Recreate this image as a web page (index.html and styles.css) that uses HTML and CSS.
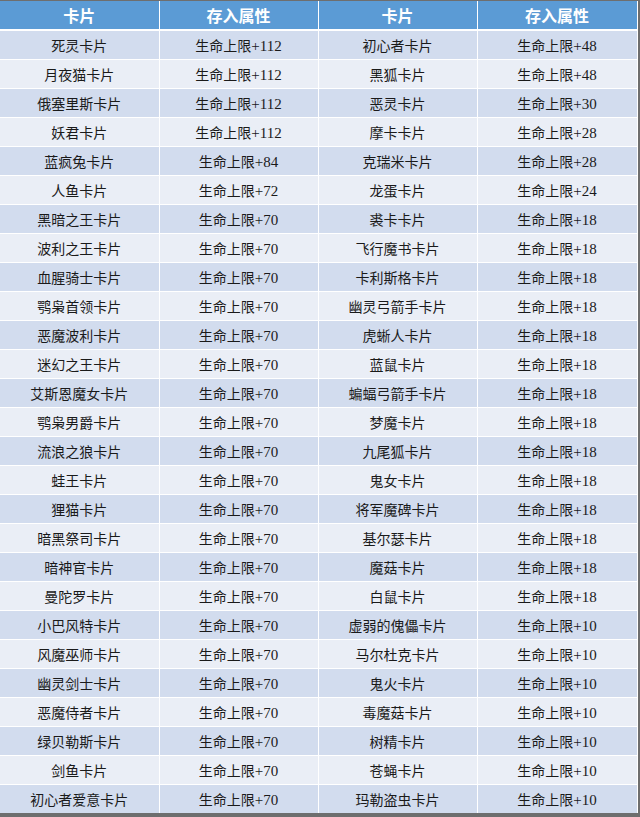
FILE: index.html
```html
<!DOCTYPE html>
<html lang="zh">
<head>
<meta charset="utf-8">
<link rel="stylesheet" href="styles.css">
</head>
<body>
<div class="frame">
<table class="cards">
<colgroup><col class="c1"><col class="c2"><col class="c3"><col class="c4"></colgroup>
<thead>
<tr><th>卡片</th><th>存入属性</th><th>卡片</th><th>存入属性</th></tr>
</thead>
<tbody>
<tr><td>死灵卡片</td><td>生命上限<span class="n">+112</span></td><td>初心者卡片</td><td>生命上限<span class="n">+48</span></td></tr>
<tr><td>月夜猫卡片</td><td>生命上限<span class="n">+112</span></td><td>黑狐卡片</td><td>生命上限<span class="n">+48</span></td></tr>
<tr><td>俄塞里斯卡片</td><td>生命上限<span class="n">+112</span></td><td>恶灵卡片</td><td>生命上限<span class="n">+30</span></td></tr>
<tr><td>妖君卡片</td><td>生命上限<span class="n">+112</span></td><td>摩卡卡片</td><td>生命上限<span class="n">+28</span></td></tr>
<tr><td>蓝疯兔卡片</td><td>生命上限<span class="n">+84</span></td><td>克瑞米卡片</td><td>生命上限<span class="n">+28</span></td></tr>
<tr><td>人鱼卡片</td><td>生命上限<span class="n">+72</span></td><td>龙蛋卡片</td><td>生命上限<span class="n">+24</span></td></tr>
<tr><td>黑暗之王卡片</td><td>生命上限<span class="n">+70</span></td><td>裘卡卡片</td><td>生命上限<span class="n">+18</span></td></tr>
<tr><td>波利之王卡片</td><td>生命上限<span class="n">+70</span></td><td>飞行魔书卡片</td><td>生命上限<span class="n">+18</span></td></tr>
<tr><td>血腥骑士卡片</td><td>生命上限<span class="n">+70</span></td><td>卡利斯格卡片</td><td>生命上限<span class="n">+18</span></td></tr>
<tr><td>鹗枭首领卡片</td><td>生命上限<span class="n">+70</span></td><td>幽灵弓箭手卡片</td><td>生命上限<span class="n">+18</span></td></tr>
<tr><td>恶魔波利卡片</td><td>生命上限<span class="n">+70</span></td><td>虎蜥人卡片</td><td>生命上限<span class="n">+18</span></td></tr>
<tr><td>迷幻之王卡片</td><td>生命上限<span class="n">+70</span></td><td>蓝鼠卡片</td><td>生命上限<span class="n">+18</span></td></tr>
<tr><td>艾斯恩魔女卡片</td><td>生命上限<span class="n">+70</span></td><td>蝙蝠弓箭手卡片</td><td>生命上限<span class="n">+18</span></td></tr>
<tr><td>鹗枭男爵卡片</td><td>生命上限<span class="n">+70</span></td><td>梦魔卡片</td><td>生命上限<span class="n">+18</span></td></tr>
<tr><td>流浪之狼卡片</td><td>生命上限<span class="n">+70</span></td><td>九尾狐卡片</td><td>生命上限<span class="n">+18</span></td></tr>
<tr><td>蛙王卡片</td><td>生命上限<span class="n">+70</span></td><td>鬼女卡片</td><td>生命上限<span class="n">+18</span></td></tr>
<tr><td>狸猫卡片</td><td>生命上限<span class="n">+70</span></td><td>将军魔碑卡片</td><td>生命上限<span class="n">+18</span></td></tr>
<tr><td>暗黑祭司卡片</td><td>生命上限<span class="n">+70</span></td><td>基尔瑟卡片</td><td>生命上限<span class="n">+18</span></td></tr>
<tr><td>暗神官卡片</td><td>生命上限<span class="n">+70</span></td><td>魔菇卡片</td><td>生命上限<span class="n">+18</span></td></tr>
<tr><td>曼陀罗卡片</td><td>生命上限<span class="n">+70</span></td><td>白鼠卡片</td><td>生命上限<span class="n">+18</span></td></tr>
<tr><td>小巴风特卡片</td><td>生命上限<span class="n">+70</span></td><td>虚弱的傀儡卡片</td><td>生命上限<span class="n">+10</span></td></tr>
<tr><td>风魔巫师卡片</td><td>生命上限<span class="n">+70</span></td><td>马尔杜克卡片</td><td>生命上限<span class="n">+10</span></td></tr>
<tr><td>幽灵剑士卡片</td><td>生命上限<span class="n">+70</span></td><td>鬼火卡片</td><td>生命上限<span class="n">+10</span></td></tr>
<tr><td>恶魔侍者卡片</td><td>生命上限<span class="n">+70</span></td><td>毒魔菇卡片</td><td>生命上限<span class="n">+10</span></td></tr>
<tr><td>绿贝勒斯卡片</td><td>生命上限<span class="n">+70</span></td><td>树精卡片</td><td>生命上限<span class="n">+10</span></td></tr>
<tr><td>剑鱼卡片</td><td>生命上限<span class="n">+70</span></td><td>苍蝇卡片</td><td>生命上限<span class="n">+10</span></td></tr>
<tr><td>初心者爱意卡片</td><td>生命上限<span class="n">+70</span></td><td>玛勒盗虫卡片</td><td>生命上限<span class="n">+10</span></td></tr>
</tbody>
</table>
</div>
</body>
</html>
```
FILE: styles.css
```css
html, body {
  margin: 0;
  padding: 0;
}
body {
  width: 640px;
  height: 817px;
  background: #6e6e6e;
  overflow: hidden;
}
.frame {
  padding-top: 1px;
  width: 637px;
}
.cards {
  width: 637px;
  border-collapse: collapse;
  table-layout: fixed;
  font-family: "Noto Sans CJK SC", sans-serif;
  font-size: 14px;
  color: #1a1a1a;
}
.c1 { width: 159px; }
.c2 { width: 159px; }
.c3 { width: 159px; }
.c4 { width: 160px; }
.cards th, .cards td {
  border: 1px solid #ffffff;
  text-align: center;
  padding: 0;
}
.cards tr:first-child th { border-top: none; }
.cards th:first-child, .cards td:first-child { border-left: none; }
.cards th {
  height: 28px;
  line-height: 20px;
  background: #5b9bd5;
  color: #ffffff;
  font-weight: bold;
  font-size: 16px;
  border-bottom-width: 2px;
}
.cards td {
  height: 28px;
  line-height: 18px;
}
.n {
  font-family: "Liberation Serif", serif;
  font-size: 15px;
  line-height: 1;
}
.cards tbody tr:nth-child(odd) td { background: #d2dcee; }
.cards tbody tr:nth-child(even) td { background: #eaeef6; }
.cards tbody tr:last-child td { border-bottom: none; }
```
